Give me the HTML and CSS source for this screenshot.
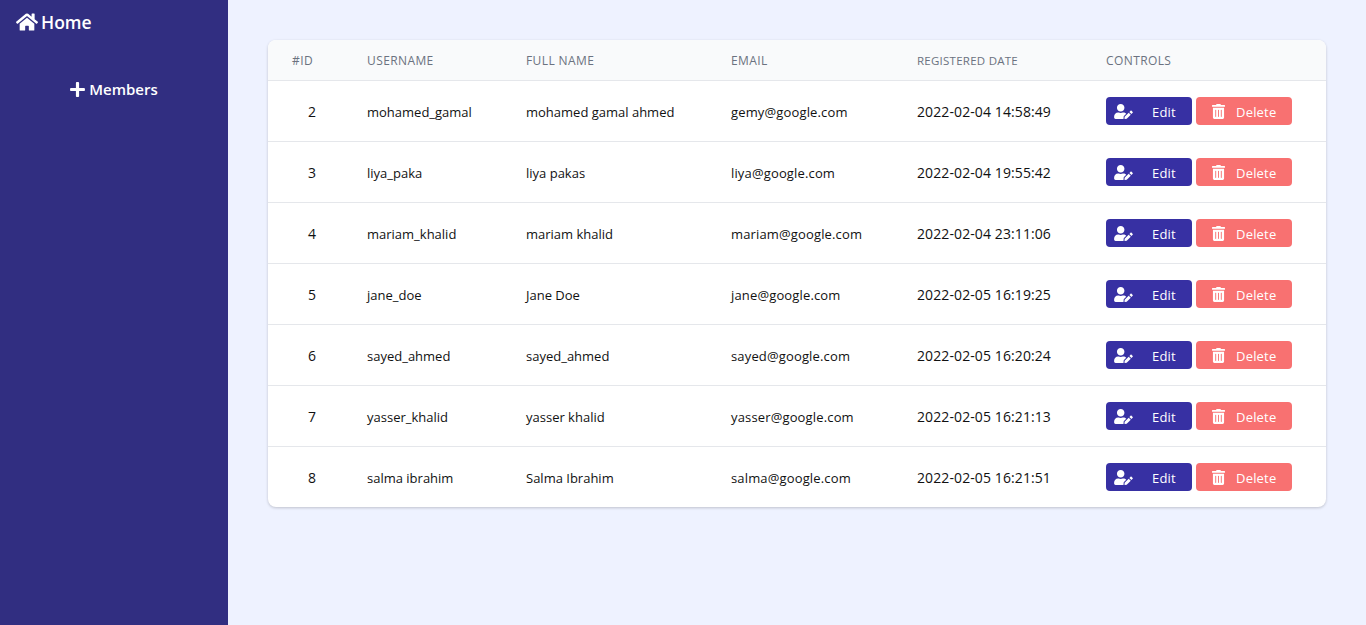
FILE: index.html
```html
<!DOCTYPE html>
<html lang="en">
<head>
<meta charset="UTF-8" />
<title>Members</title>
<link rel="stylesheet" href="styles.css">
</head>
<body>
<svg class="sprite" aria-hidden="true">
    <symbol id="i-home" viewBox="0 0 576 512"><path d="M280.37 148.26L96 300.11V464a16 16 0 0 0 16 16l112.06-.29a16 16 0 0 0 15.92-16V368a16 16 0 0 1 16-16h64a16 16 0 0 1 16 16v95.64a16 16 0 0 0 16 16.05L464 480a16 16 0 0 0 16-16V300L295.67 148.26a12.19 12.19 0 0 0-15.3 0zM571.6 251.47L488 182.56V44.05a12 12 0 0 0-12-12h-56a12 12 0 0 0-12 12v72.61L318.47 43a48 48 0 0 0-61 0L4.34 251.47a12 12 0 0 0-1.6 16.9l25.5 31A12 12 0 0 0 45.15 301l235.22-193.74a12.19 12.19 0 0 1 15.3 0L530.9 301a12 12 0 0 0 16.9-1.6l25.5-31a12 12 0 0 0-1.7-16.93z"/></symbol>
    <symbol id="i-plus" viewBox="0 0 448 512"><path d="M416 208H272V64c0-17.67-14.33-32-32-32h-32c-17.67 0-32 14.33-32 32v144H32c-17.67 0-32 14.33-32 32v32c0 17.67 14.33 32 32 32h144v144c0 17.67 14.33 32 32 32h32c17.67 0 32-14.33 32-32V304h144c17.67 0 32-14.33 32-32v-32c0-17.67-14.33-32-32-32z"/></symbol>
    <symbol id="i-edit" viewBox="0 0 640 512"><path d="M224 256c70.7 0 128-57.3 128-128S294.7 0 224 0 96 57.3 96 128s57.3 128 128 128zm89.6 32h-16.7c-22.2 10.2-46.9 16-72.9 16s-50.6-5.8-72.9-16h-16.7C60.2 288 0 348.2 0 422.4V464c0 26.5 21.5 48 48 48h274.9c-2.4-6.8-3.4-14-2.6-21.3l6.8-60.9 1.2-11.1 7.9-7.9 77.3-77.3c-24.5-27.7-60-45.5-99.9-45.5zm45.3 145.3l-6.8 61c-1.1 10.2 7.5 18.8 17.6 17.6l60.9-6.8 137.9-137.9-71.7-71.7-137.9 137.8zM633 268.9L595.1 231c-9.3-9.3-24.5-9.3-33.8 0l-37.8 37.8-4.1 4.1 71.8 71.7 41.8-41.8c9.3-9.4 9.3-24.5 0-33.9z"/></symbol>
    <symbol id="i-trash" viewBox="0 0 448 512"><path d="M32 464a48 48 0 0 0 48 48h288a48 48 0 0 0 48-48V128H32zm272-256a16 16 0 0 1 32 0v224a16 16 0 0 1-32 0zm-96 0a16 16 0 0 1 32 0v224a16 16 0 0 1-32 0zm-96 0a16 16 0 0 1 32 0v224a16 16 0 0 1-32 0zM432 32H312l-9.4-18.7A24 24 0 0 0 281.1 0H166.8a23.72 23.72 0 0 0-21.4 13.3L136 32H16A16 16 0 0 0 0 48v32a16 16 0 0 0 16 16h416a16 16 0 0 0 16-16V48a16 16 0 0 0-16-16z"/></symbol>
</svg>

<div class="layout">
    <aside class="sidebar">
        <a class="brand" href="#"><svg class="brand-icon"><use href="#i-home"/></svg>Home</a>
        <a class="side-link" href="#"><svg class="side-icon"><use href="#i-plus"/></svg>Members</a>
    </aside>

    <main class="content">
        <div class="card">
            <table class="members">
                <colgroup>
                    <col class="col-id"><col class="col-user"><col class="col-name">
                    <col class="col-mail"><col class="col-date"><col>
                </colgroup>
                <thead>
                    <tr><th>#ID</th><th>Username</th><th>Full Name</th><th>Email</th><th class="head-date">Registered Date</th><th>Controls</th></tr>
                </thead>
                <tbody>
                    <tr>
                        <td class="cell-id">2</td><td>mohamed_gamal</td><td>mohamed gamal ahmed</td><td class="cell-mail">gemy@google.com</td><td class="cell-date">2022-02-04 14:58:49</td>
                        <td class="cell-controls"><div class="controls"><a class="btn btn-edit" href="#"><svg class="icon-edit"><use href="#i-edit"/></svg><span class="btn-label">Edit</span></a><a class="btn btn-delete" href="#"><svg class="icon-trash"><use href="#i-trash"/></svg><span class="btn-label">Delete</span></a></div></td>
                    </tr>
                    <tr>
                        <td class="cell-id">3</td><td>liya_paka</td><td>liya pakas</td><td class="cell-mail">liya@google.com</td><td class="cell-date">2022-02-04 19:55:42</td>
                        <td class="cell-controls"><div class="controls"><a class="btn btn-edit" href="#"><svg class="icon-edit"><use href="#i-edit"/></svg><span class="btn-label">Edit</span></a><a class="btn btn-delete" href="#"><svg class="icon-trash"><use href="#i-trash"/></svg><span class="btn-label">Delete</span></a></div></td>
                    </tr>
                    <tr>
                        <td class="cell-id">4</td><td>mariam_khalid</td><td>mariam khalid</td><td class="cell-mail">mariam@google.com</td><td class="cell-date">2022-02-04 23:11:06</td>
                        <td class="cell-controls"><div class="controls"><a class="btn btn-edit" href="#"><svg class="icon-edit"><use href="#i-edit"/></svg><span class="btn-label">Edit</span></a><a class="btn btn-delete" href="#"><svg class="icon-trash"><use href="#i-trash"/></svg><span class="btn-label">Delete</span></a></div></td>
                    </tr>
                    <tr>
                        <td class="cell-id">5</td><td>jane_doe</td><td>Jane Doe</td><td class="cell-mail">jane@google.com</td><td class="cell-date">2022-02-05 16:19:25</td>
                        <td class="cell-controls"><div class="controls"><a class="btn btn-edit" href="#"><svg class="icon-edit"><use href="#i-edit"/></svg><span class="btn-label">Edit</span></a><a class="btn btn-delete" href="#"><svg class="icon-trash"><use href="#i-trash"/></svg><span class="btn-label">Delete</span></a></div></td>
                    </tr>
                    <tr>
                        <td class="cell-id">6</td><td>sayed_ahmed</td><td>sayed_ahmed</td><td class="cell-mail">sayed@google.com</td><td class="cell-date">2022-02-05 16:20:24</td>
                        <td class="cell-controls"><div class="controls"><a class="btn btn-edit" href="#"><svg class="icon-edit"><use href="#i-edit"/></svg><span class="btn-label">Edit</span></a><a class="btn btn-delete" href="#"><svg class="icon-trash"><use href="#i-trash"/></svg><span class="btn-label">Delete</span></a></div></td>
                    </tr>
                    <tr>
                        <td class="cell-id">7</td><td>yasser_khalid</td><td>yasser khalid</td><td class="cell-mail">yasser@google.com</td><td class="cell-date">2022-02-05 16:21:13</td>
                        <td class="cell-controls"><div class="controls"><a class="btn btn-edit" href="#"><svg class="icon-edit"><use href="#i-edit"/></svg><span class="btn-label">Edit</span></a><a class="btn btn-delete" href="#"><svg class="icon-trash"><use href="#i-trash"/></svg><span class="btn-label">Delete</span></a></div></td>
                    </tr>
                    <tr>
                        <td class="cell-id">8</td><td>salma ibrahim</td><td>Salma Ibrahim</td><td class="cell-mail">salma@google.com</td><td class="cell-date">2022-02-05 16:21:51</td>
                        <td class="cell-controls"><div class="controls"><a class="btn btn-edit" href="#"><svg class="icon-edit"><use href="#i-edit"/></svg><span class="btn-label">Edit</span></a><a class="btn btn-delete" href="#"><svg class="icon-trash"><use href="#i-trash"/></svg><span class="btn-label">Delete</span></a></div></td>
                    </tr>
                </tbody>
            </table>
        </div>
    </main>
</div>
</body>
</html>
```

FILE: styles.css
```css
* {
    box-sizing: border-box;
}
body {
    margin: 0;
    font-family: "Open Sans", sans-serif;
    background: #eef2ff;
    color: #111;
}
a {
    color: inherit;
    text-decoration: none;
}
.sprite {
    display: none;
}
.layout {
    display: flex;
    min-height: 625px;
}
.sidebar {
    width: 228px;
    flex-shrink: 0;
    background: #312e81;
    color: #fff;
    display: flex;
    flex-direction: column;
    font-weight: 600;
}
.brand {
    display: flex;
    align-items: center;
    gap: 3px;
    height: 44px;
    padding-left: 16px;
    font-size: 17.5px;
}
.brand-icon {
    width: 22px;
    height: 20px;
    fill: #fff;
}
.side-link {
    display: flex;
    align-items: center;
    justify-content: center;
    gap: 4px;
    margin-top: 31px;
    height: 28px;
    font-size: 15px;
}
.side-icon {
    width: 15px;
    height: 17px;
    fill: #fff;
}
.content {
    flex: 1;
    padding: 40px;
}
.card {
    background: #fff;
    border-radius: 8px;
    overflow: hidden;
    box-shadow: 0 1px 3px rgba(0, 0, 0, 0.2);
}
.members {
    width: 100%;
    border-collapse: collapse;
    table-layout: fixed;
    font-size: 13px;
}
.col-id { width: 75px; }
.col-user { width: 159px; }
.col-name { width: 205px; }
.col-mail { width: 186px; }
.col-date { width: 189px; }
.members th {
    height: 40px;
    padding: 2px 24px 0;
    background: #f9fafb;
    border-bottom: 1px solid #e5e7eb;
    color: #6b7280;
    font-size: 12px;
    font-weight: 400;
    letter-spacing: 0.4px;
    text-align: left;
    text-transform: uppercase;
}
.members th.head-date {
    font-size: 11.5px;
    letter-spacing: 0.25px;
}
.members td {
    height: 61px;
    padding: 2px 24px 0;
    border-bottom: 1px solid #e5e7eb;
    white-space: nowrap;
}
.members tr:last-child td {
    border-bottom: none;
}
.members td.cell-id {
    padding-left: 40px;
    font-size: 14px;
}
.members td.cell-mail {
    letter-spacing: 0.15px;
}
.members td.cell-date {
    font-size: 14px;
    letter-spacing: 0.1px;
}
.members td.cell-controls {
    padding-top: 0;
}
.controls {
    display: flex;
    gap: 4px;
}
.btn {
    display: flex;
    align-items: center;
    height: 28px;
    border-radius: 4px;
    color: #fff;
    font-weight: 500;
}
.btn-label {
    padding-top: 2px;
    letter-spacing: 0.2px;
}
.btn-edit {
    width: 86px;
    padding-left: 8px;
    background: #3730a3;
}
.btn-delete {
    width: 96px;
    padding-left: 16px;
    background: #f87171;
}
.icon-edit {
    width: 19px;
    height: 15px;
    margin: 1px 19px 0 0;
    fill: #fff;
}
.icon-trash {
    width: 13px;
    height: 15px;
    margin: 1px 11px 0 0;
    fill: #fff;
}
```
